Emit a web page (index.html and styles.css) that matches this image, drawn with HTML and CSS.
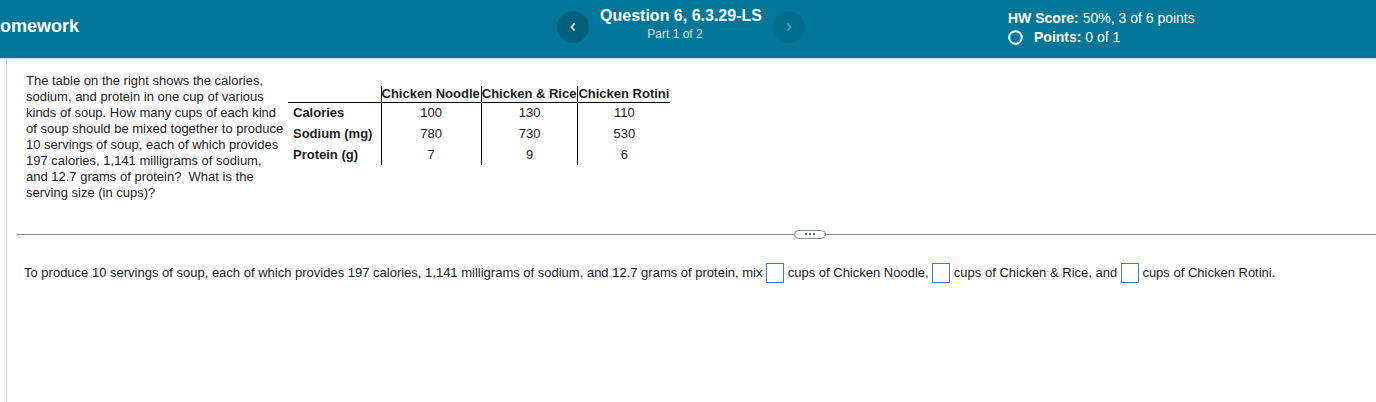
FILE: index.html
```html
<!DOCTYPE html>
<html>
<head>
<meta charset="utf-8">
<link rel="stylesheet" href="styles.css">
</head>
<body>
<header class="top">
  <div class="title">omework</div>
  <div class="qnav">
    <button class="navbtn prev" aria-label="Previous"><svg width="8" height="10" viewBox="0 0 8 10"><path d="M5.5 1.5 L2.5 5 L5.5 8.5" fill="none" stroke="#ffffff" stroke-width="1.8"/></svg></button>
    <div class="qinfo">
      <div class="qtitle">Question 6, 6.3.29-LS</div>
      <div class="qpart">Part 1 of 2</div>
    </div>
    <button class="navbtn next" aria-label="Next"><svg width="8" height="10" viewBox="0 0 8 10"><path d="M2.5 1.5 L5.5 5 L2.5 8.5" fill="none" stroke="#5b9fb6" stroke-width="1.6"/></svg></button>
  </div>
  <div class="score">
    <div class="score-line"><b>HW Score:</b> 50%, 3 of 6 points</div>
    <div class="points-line">
      <svg class="ring" width="15" height="15" viewBox="0 0 15 15"><circle cx="7.5" cy="7.5" r="6.3" fill="none" stroke="#ffffff" stroke-width="2"/></svg>
      <span><b>Points:</b> 0 of 1</span>
    </div>
  </div>
</header>
<main class="main">
  <section class="problem">
    <p class="prompt">The table on the right shows the calories, sodium, and protein in one cup of various kinds of soup. How many cups of each kind of soup should be mixed together to produce 10 servings of soup, each of which provides 197 calories, 1,141 milligrams of sodium, and 12.7 grams of protein?&nbsp; What is the serving size (in cups)?</p>
    <table class="soup">
      <thead>
        <tr><th class="lbl"></th><th class="col">Chicken Noodle</th><th class="col">Chicken &amp; Rice</th><th class="col">Chicken Rotini</th></tr>
      </thead>
      <tbody>
        <tr><td class="lbl">Calories</td><td class="col">100</td><td class="col">130</td><td class="col">110</td></tr>
        <tr><td class="lbl">Sodium (mg)</td><td class="col">780</td><td class="col">730</td><td class="col">530</td></tr>
        <tr><td class="lbl">Protein (g)</td><td class="col">7</td><td class="col">9</td><td class="col">6</td></tr>
      </tbody>
    </table>
  </section>
  <div class="divider">
    <span class="rule rule-left"></span>
    <button class="pill" aria-label="More"><i></i><i></i><i></i></button>
    <span class="rule rule-right"></span>
  </div>
  <p class="answer">To produce 10 servings of soup, each of which provides 197 calories, 1,141 milligrams of sodium, and 12.7 grams of protein, mix <span class="box"></span> cups of Chicken Noodle, <span class="box"></span> cups of Chicken &amp; Rice, and <span class="box"></span> cups of Chicken Rotini.</p>
</main>
</body>
</html>
```
FILE: styles.css
```css
* { box-sizing: border-box; }
html, body { margin: 0; padding: 0; }
body {
  font-family: "Liberation Sans", Arial, sans-serif;
  color: #1c1c1c;
  background: #ffffff;
  width: 1376px;
  height: 402px;
  overflow: hidden;
}
.top {
  height: 59px;
  background: #007799;
  border-bottom: 1px solid #c3dbe4;
  display: flex;
  align-items: flex-start;
  color: #ffffff;
}
.title {
  width: 557px;
  flex: none;
  font-size: 18px;
  font-weight: bold;
  line-height: 20px;
  padding-top: 16px;
}
.qnav {
  display: flex;
  align-items: flex-start;
  width: 249px;
  flex: none;
}
.navbtn {
  width: 32px;
  height: 32px;
  border-radius: 50%;
  border: none;
  padding: 0;
  margin-top: 11px;
  display: flex;
  align-items: center;
  justify-content: center;
  flex: none;
}
.prev { background: #00617f; }
.next { background: #006e8e; }
.qinfo {
  width: 184px;
  text-align: center;
  padding-top: 7px;
}
.qtitle {
  font-size: 16px;
  font-weight: bold;
  line-height: 18px;
}
.qpart {
  font-size: 12px;
  line-height: 14px;
  margin-top: 2px;
  padding-right: 12px;
  color: #d3e6ec;
}
.score {
  margin-left: 202px;
  padding-top: 10px;
  font-size: 14px;
}
.score-line { line-height: 16px; }
.points-line {
  display: flex;
  align-items: center;
  gap: 11px;
  margin-top: 3px;
  line-height: 16px;
}
.ring { display: block; }
.main {
  margin-left: 6px;
  border-left: 1px solid #cfd5dd;
  height: 343px;
}
.problem {
  display: flex;
  align-items: flex-start;
  padding-top: 14px;
  padding-left: 19px;
}
.prompt {
  margin: 0 4px 0 0;
  width: 258px;
  font-size: 13px;
  line-height: 16px;
  flex: none;
}
.soup {
  border-collapse: collapse;
  margin-top: 13px;
  font-size: 13px;
}
.soup th {
  font-weight: bold;
  line-height: 15px;
  height: 16px;
  padding: 0 1px 0 0;
  border-bottom: 1px solid #000000;
  white-space: nowrap;
  text-align: left;
}
.soup td {
  height: 21px;
  line-height: 16px;
  padding: 0;
  text-align: center;
}
.soup .lbl {
  width: 93px;
  padding-left: 5px;
  text-align: left;
  font-weight: bold;
}
.soup .col { border-left: 1px solid #000000; }
.divider {
  display: flex;
  align-items: center;
  margin-top: 28px;
  margin-left: 10px;
  height: 10px;
}
.rule {
  height: 1px;
  background: #838a93;
}
.rule-left { width: 777px; flex: none; }
.rule-right { flex: 1; }
.pill {
  width: 32px;
  height: 9px;
  border: 1px solid #838a93;
  border-radius: 5px;
  background: #ffffff;
  padding: 0;
  display: flex;
  align-items: center;
  justify-content: center;
  gap: 2px;
  flex: none;
}
.pill i {
  display: block;
  width: 2px;
  height: 2px;
  background: #5c636b;
}
.answer {
  margin: 24px 0 0 17px;
  font-size: 13px;
  line-height: 20px;
}
.box {
  display: inline-block;
  width: 18px;
  height: 20px;
  border: 1px solid #3b78d8;
  vertical-align: middle;
  margin-top: -2px;
}
```
